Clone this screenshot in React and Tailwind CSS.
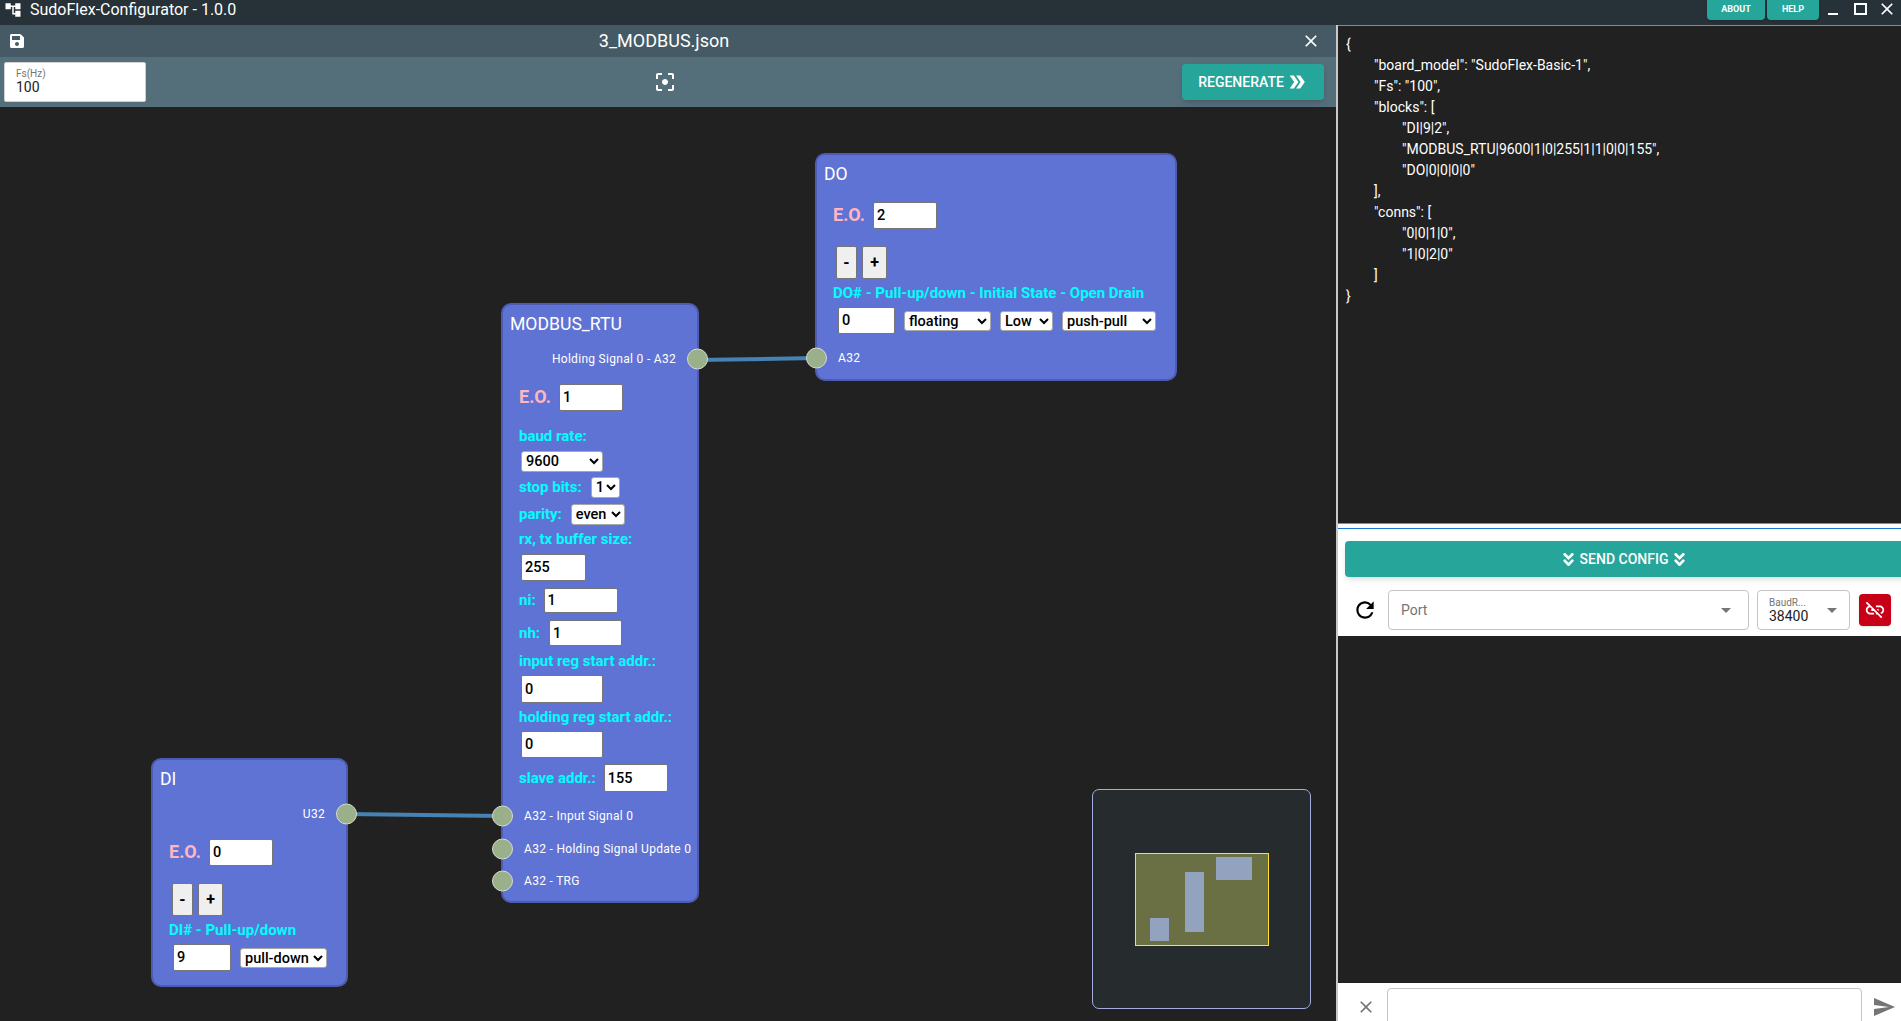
import {
  MdAccountTree,
  MdArrowDropDown,
  MdClose,
  MdDoubleArrow,
  MdFilterCenterFocus,
  MdLinkOff,
  MdRefresh,
  MdSend,
} from 'react-icons/md';
import { FaAngleDoubleDown, FaSave } from 'react-icons/fa';

const CONFIG_LINES = [
  [0, '{'],
  [1, '"board_model": "SudoFlex-Basic-1",'],
  [1, '"Fs": "100",'],
  [1, '"blocks": ['],
  [2, '"DI|9|2",'],
  [2, '"MODBUS_RTU|9600|1|0|255|1|1|0|0|155",'],
  [2, '"DO|0|0|0|0"'],
  [1, '],'],
  [1, '"conns": ['],
  [2, '"0|0|1|0",'],
  [2, '"1|0|2|0"'],
  [1, ']'],
  [0, '}'],
];

function Label({ children, className = '' }) {
  return (
    <div className={`flex h-5 items-center text-[15px] font-bold whitespace-nowrap text-[#00ffff] ${className}`}>
      {children}
    </div>
  );
}

function NumberField({ value, className = '' }) {
  return (
    <input
      readOnly
      value={value}
      className={`rounded-[2px] border border-[#767676] bg-white px-[3px] text-[14.5px] font-medium text-black outline-none ${className}`}
    />
  );
}

function Pick({ options, className = '' }) {
  return (
    <select
      defaultValue={options[0]}
      className={`rounded-[3px] border border-[#a8a8a8] bg-white text-[14.5px] font-medium text-black ${className}`}
    >
      {options.map((option) => (
        <option key={option}>{option}</option>
      ))}
    </select>
  );
}

function Port({ className = '' }) {
  return (
    <span className={`absolute top-1/2 h-[21px] w-[21px] -translate-y-1/2 rounded-full border border-[#d5dccf] bg-[#9ab08a] ${className}`} />
  );
}

function OutputRow({ label, className = '' }) {
  return (
    <div className={`relative flex h-5 items-center justify-end pr-[21px] text-xs tracking-[0.3px] text-white ${className}`}>
      {label}
      <Port className="right-[-11px]" />
    </div>
  );
}

function InputRow({ label, className = '' }) {
  return (
    <div className={`relative flex h-5 items-center pl-[21px] text-xs tracking-[0.3px] text-white ${className}`}>
      <Port className="left-[-11px]" />
      {label}
    </div>
  );
}

function EoRow({ value, className = '' }) {
  return (
    <div className={`flex items-center ${className}`}>
      <span className="w-[40px] text-lg font-bold text-[#ffb6c1]">E.O.</span>
      <NumberField value={value} className="h-[27px] w-16" />
    </div>
  );
}

function StepButtons({ className = '' }) {
  return (
    <div className={`flex gap-[5px] ${className}`}>
      <button className="h-[33px] w-[21px] rounded-[2px] border border-[#767676] bg-[#efefef] text-base font-bold text-black">-</button>
      <button className="h-[33px] w-[25px] rounded-[2px] border border-[#767676] bg-[#efefef] text-base font-bold text-black">+</button>
    </div>
  );
}

function ModbusNode() {
  return (
    <div className="absolute top-[196px] left-[501px] h-[600px] w-[198px] rounded-[10px] border-2 border-[#4d5bb0] bg-[#5f73d4] pt-2">
      <div className="flex h-[22px] items-center pl-[7px] text-[17.6px] text-white">MODBUS_RTU</div>
      <OutputRow label="Holding Signal 0 - A32" className="mt-[14px]" />
      <EoRow value="1" className="mt-[14px] ml-4" />
      <Label className="mt-[15px] ml-4">baud rate:</Label>
      <Pick options={['9600']} className="mt-[5px] ml-[18px] block h-[21px] w-[82px]" />
      <div className="mt-[5px] ml-4 flex h-[21px] items-center">
        <Label>stop bits:</Label>
        <Pick options={['1']} className="ml-[9px] h-[21px] w-[29px]" />
      </div>
      <div className="mt-[6px] ml-4 flex h-[21px] items-center">
        <Label>parity:</Label>
        <Pick options={['even']} className="ml-[9px] h-[21px] w-[54px]" />
      </div>
      <Label className="mt-1 ml-4">rx, tx buffer size:</Label>
      <NumberField value="255" className="mt-[5px] ml-[18px] block h-[27px] w-[65px]" />
      <div className="mt-[7px] ml-4 flex h-[25px] items-center">
        <Label>ni:</Label>
        <NumberField value="1" className="ml-2 h-[25px] w-[74px]" />
      </div>
      <div className="mt-[7px] ml-4 flex h-[26px] items-center">
        <Label>nh:</Label>
        <NumberField value="1" className="ml-[9px] h-[26px] w-[73px]" />
      </div>
      <Label className="mt-[5px] ml-4">input reg start addr.:</Label>
      <NumberField value="0" className="mt-1 ml-[18px] block h-[28px] w-[82px]" />
      <Label className="mt-1 ml-4">holding reg start addr.:</Label>
      <NumberField value="0" className="mt-1 ml-[18px] block h-[27px] w-[82px]" />
      <div className="mt-[6px] ml-4 flex h-[28px] items-center">
        <Label>slave addr.:</Label>
        <NumberField value="155" className="ml-2 h-[28px] w-16" />
      </div>
      <InputRow label="A32 - Input Signal 0" className="mt-[14px]" />
      <InputRow label="A32 - Holding Signal Update 0" className="mt-[13px] whitespace-nowrap" />
      <InputRow label="A32 - TRG" className="mt-[12px]" />
    </div>
  );
}

function DoNode() {
  return (
    <div className="absolute top-[46px] left-[815px] h-[228px] w-[362px] rounded-[10px] border-2 border-[#4d5bb0] bg-[#5f73d4] pt-2">
      <div className="flex h-[22px] items-center pl-[7px] text-[17.6px] text-white">DO</div>
      <EoRow value="2" className="mt-[16px] ml-4" />
      <StepButtons className="mt-[17px] ml-[19px]" />
      <Label className="mt-[4px] ml-4">DO# - Pull-up/down - Initial State - Open Drain</Label>
      <div className="mt-[4px] ml-[21px] flex items-center">
        <NumberField value="0" className="h-[27px] w-[57px]" />
        <Pick options={['floating']} className="ml-[9px] h-5 w-[87px]" />
        <Pick options={['Low']} className="ml-[9px] h-5 w-[53px]" />
        <Pick options={['push-pull']} className="ml-[9px] h-5 w-[94px]" />
      </div>
      <InputRow label="A32" className="mt-[14px]" />
    </div>
  );
}

function DiNode() {
  return (
    <div className="absolute top-[651px] left-[151px] h-[229px] w-[197px] rounded-[10px] border-2 border-[#4d5bb0] bg-[#5f73d4] pt-2">
      <div className="flex h-[22px] items-center pl-[7px] text-[17.6px] text-white">DI</div>
      <OutputRow label="U32" className="mt-[14px]" />
      <EoRow value="0" className="mt-[14px] ml-4" />
      <StepButtons className="mt-[17px] ml-[19px]" />
      <Label className="mt-1 ml-4">DI# - Pull-up/down</Label>
      <div className="mt-1 ml-5 flex items-center">
        <NumberField value="9" className="h-[27px] w-[58px]" />
        <Pick options={['pull-down']} className="ml-[9px] h-5 w-[87px]" />
      </div>
    </div>
  );
}

function MiniMap() {
  return (
    <div className="absolute top-[682px] left-[1092px] h-[220px] w-[219px] rounded-[7px] border border-[#a4abe0] bg-[#262b2e]">
      <svg width="217" height="218" className="block">
        <rect x="42.5" y="63.5" width="133" height="92" fill="#6b6f44" stroke="#ffe135" />
        <rect x="57" y="128" width="19" height="23" fill="#93a3bf" />
        <rect x="92" y="82" width="19" height="60" fill="#93a3bf" />
        <rect x="123" y="67" width="36" height="23" fill="#93a3bf" />
      </svg>
    </div>
  );
}

function Canvas() {
  return (
    <div className="relative flex-1 bg-[#212121]">
      <svg className="absolute inset-0" width="1336" height="914">
        <line x1="346" y1="707" x2="503" y2="709" stroke="#4682b4" strokeWidth="4" />
        <line x1="697" y1="253" x2="817" y2="251" stroke="#4682b4" strokeWidth="4" />
      </svg>
      <DiNode />
      <ModbusNode />
      <DoNode />
      <MiniMap />
    </div>
  );
}

function FlowPane() {
  return (
    <div className="flex w-[1336px] shrink-0 flex-col">
      <div className="relative flex h-8 items-center justify-center bg-[#455a64] pr-2 text-lg text-white">
        <FaSave className="absolute top-2 left-[9px] text-base" />
        3_MODBUS.json
        <MdClose className="absolute top-[6px] right-[15px] text-xl" />
      </div>
      <div className="relative flex h-[50px] items-center justify-center bg-[#546e7a] pr-[6px]">
        <div className="absolute top-[5px] left-1 h-10 w-[142px] rounded-[2px] border border-[#d0d0d0] bg-white pt-[5px] pl-[11px]">
          <div className="text-[10px] leading-[11px] text-[#757575]">Fs(Hz)</div>
          <div className="text-sm leading-4 text-[#212121]">100</div>
        </div>
        <MdFilterCenterFocus className="text-2xl text-white" />
        <button className="absolute top-[7px] right-3 flex h-9 w-[142px] items-center justify-center gap-[2px] rounded bg-[#26a69a] text-sm font-medium text-white shadow-md">
          REGENERATE
          <MdDoubleArrow className="text-[22px]" />
        </button>
      </div>
      <Canvas />
    </div>
  );
}

function SidePane() {
  return (
    <div className="flex min-w-0 flex-1 flex-col border-l-2 border-[#c8c8c8] bg-[#212121]">
      <div className="h-[499px] border-t border-b border-[#8a8a8a] pt-2 pl-2 text-sm leading-[21px] text-white">
        {CONFIG_LINES.map(([depth, text], index) => (
          <div key={index} style={{ paddingLeft: depth * 28 }}>
            {text}
          </div>
        ))}
      </div>
      <div className="h-[112px] overflow-hidden bg-white pt-[4px]">
        <div className="h-px bg-[#1976d2]" />
        <button className="mt-3 ml-[7px] flex h-9 w-[600px] items-center justify-center gap-[3px] rounded bg-[#26a69a] pr-[42px] text-sm font-medium text-white shadow-md">
          <FaAngleDoubleDown className="text-[17px]" />
          SEND CONFIG
          <FaAngleDoubleDown className="text-[17px]" />
        </button>
        <div className="mt-[13px] flex items-center">
          <MdRefresh className="ml-[14px] text-[26px] text-black" />
          <div className="ml-[10px] flex h-10 w-[361px] items-center justify-between rounded border border-[#c4c4c4] pr-[10px] pl-3 text-sm text-[#757575]">
            Port
            <MdArrowDropDown className="text-2xl" />
          </div>
          <div className="ml-2 flex h-10 w-[93px] items-center justify-between rounded border border-[#c4c4c4] pr-[5px] pl-[11px]">
            <div>
              <div className="text-[10px] leading-[11px] text-[#757575]">BaudR...</div>
              <div className="text-sm leading-4 text-[#212121]">38400</div>
            </div>
            <MdArrowDropDown className="text-2xl text-[#757575]" />
          </div>
          <button className="ml-[9px] flex h-8 w-8 items-center justify-center rounded bg-[#c70018] text-white shadow">
            <MdLinkOff className="text-[22px]" />
          </button>
        </div>
      </div>
      <div className="flex-1" />
      <div className="flex h-[38px] items-start bg-white pt-[5px]">
        <MdClose className="mt-[9px] ml-[18px] text-xl text-[#757575]" />
        <div className="ml-[11px] h-[40px] w-[475px] rounded border border-[#c4c4c4]" />
        <MdSend className="mt-[7px] ml-[10px] text-[24px] text-[#757575]" />
      </div>
    </div>
  );
}

export default function App() {
  return (
    <div className="flex h-[1021px] w-[1901px] flex-col overflow-hidden bg-[#212121] font-['Roboto',sans-serif]">
      <div className="relative flex h-[25px] items-center bg-[#263238] text-base text-white">
        <MdAccountTree className="ml-[4px] -translate-y-[3px] text-lg" />
        <span className="ml-[8px] -translate-y-[3px]">SudoFlex-Configurator - 1.0.0</span>
        <div className="ml-auto flex items-start self-start">
          <button className="h-5 w-[58px] rounded-b bg-[#26a69a] text-[9px] font-bold shadow">ABOUT</button>
          <button className="ml-[2px] h-5 w-[52px] rounded-b bg-[#26a69a] text-[9px] font-bold shadow">HELP</button>
          <span className="mt-[13px] ml-[9px] h-[2px] w-[10px] bg-white" />
          <span className="mt-[3px] ml-[16px] h-[12px] w-[13px] border-2 border-white" />
          <MdClose className="mt-[-1px] ml-[10px] mr-[4px] text-xl" />
        </div>
      </div>
      <div className="flex flex-1">
        <FlowPane />
        <SidePane />
      </div>
    </div>
  );
}
